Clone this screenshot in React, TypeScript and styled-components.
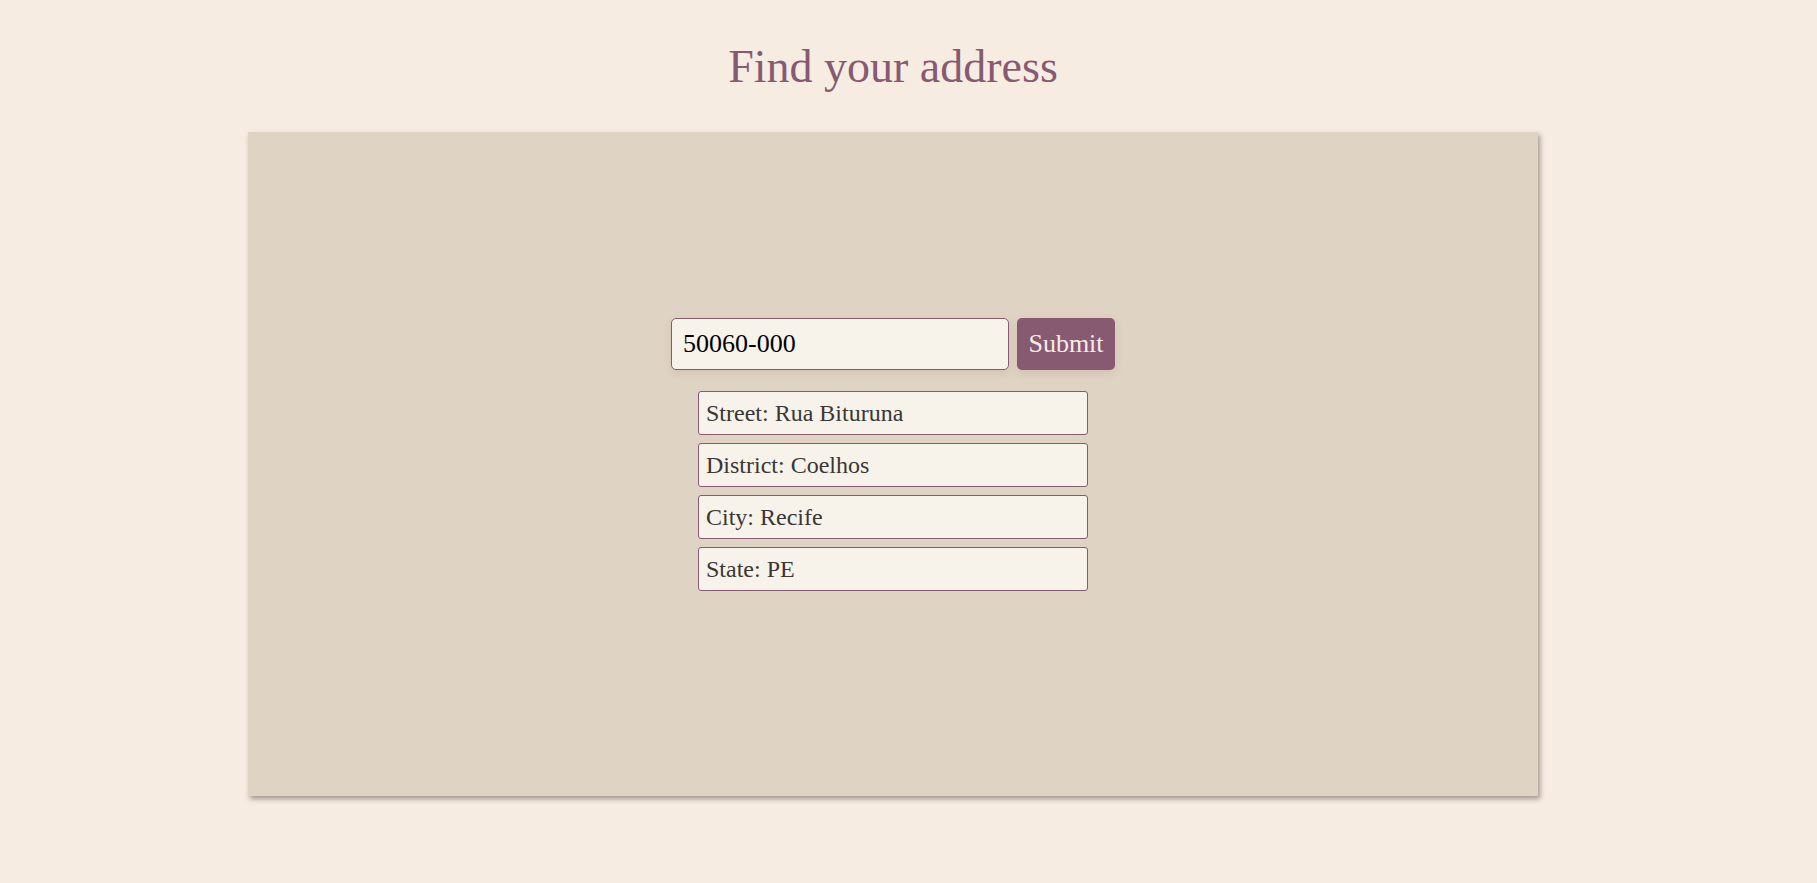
import styled, { createGlobalStyle } from "styled-components";

type AddressField = {
  label: string;
  value: string;
};

const address: AddressField[] = [
  { label: "Street", value: "Rua Bituruna" },
  { label: "District", value: "Coelhos" },
  { label: "City", value: "Recife" },
  { label: "State", value: "PE" },
];

// Postal code lookup page with the result already filled in
export default function App() {
  return (
    <>
      <GlobalStyle />
      <Page>
        <Title>Find your address</Title>
        <Card>
          <SearchForm onSubmit={(e) => e.preventDefault()}>
            <CepInput defaultValue="50060-000" />
            <SubmitButton type="submit">Submit</SubmitButton>
          </SearchForm>
          <ResultList>
            {address.map((field) => (
              <ResultItem key={field.label}>
                {field.label}: {field.value}
              </ResultItem>
            ))}
          </ResultList>
        </Card>
      </Page>
    </>
  );
}

const GlobalStyle = createGlobalStyle`
  html, body {
    margin: 0;
    background-color: #f7ece2;
  }
  * {
    box-sizing: border-box;
  }
`;

const Page = styled.div`
  min-height: 883px;
  display: flex;
  flex-direction: column;
  align-items: center;
  padding: 40px 31px 0 0;
  font-family: "Liberation Serif", "Times New Roman", serif;
`;

const Title = styled.h1`
  margin: 0 0 39px 0;
  font-size: 46px;
  font-weight: 400;
  line-height: normal;
  color: #875a72;
`;

const Card = styled.main`
  width: 1290px;
  height: 664px;
  display: flex;
  flex-direction: column;
  align-items: center;
  justify-content: center;
  padding-bottom: 20px;
  background-color: #dfd3c3;
  box-shadow: 2px 3px 5px rgba(60, 45, 40, 0.45);
`;

const SearchForm = styled.form`
  display: flex;
  gap: 8px;
  margin-bottom: 21px;
`;

const CepInput = styled.input`
  width: 338px;
  height: 52px;
  padding: 0 11px;
  font-family: inherit;
  font-size: 26px;
  color: #000;
  background-color: #f8f3ea;
  border: 1px solid #875a72;
  border-radius: 5px;
  box-shadow: 0 3px 8px rgba(120, 90, 70, 0.12);
  outline: none;
`;

const SubmitButton = styled.button`
  width: 98px;
  height: 52px;
  padding: 0;
  font-family: inherit;
  font-size: 26px;
  color: #f7ede6;
  background-color: #875a72;
  border: none;
  border-radius: 5px;
  box-shadow: 0 3px 8px rgba(120, 90, 70, 0.15);
  cursor: pointer;
`;

const ResultList = styled.ul`
  list-style: none;
  margin: 0;
  padding: 0;
  display: flex;
  flex-direction: column;
  gap: 8px;
`;

const ResultItem = styled.li`
  width: 390px;
  height: 44px;
  padding: 7px;
  font-size: 24px;
  line-height: 28px;
  color: #3a3636;
  background-color: #f8f3ea;
  border: 1px solid #875a72;
  border-radius: 3px;
`;
